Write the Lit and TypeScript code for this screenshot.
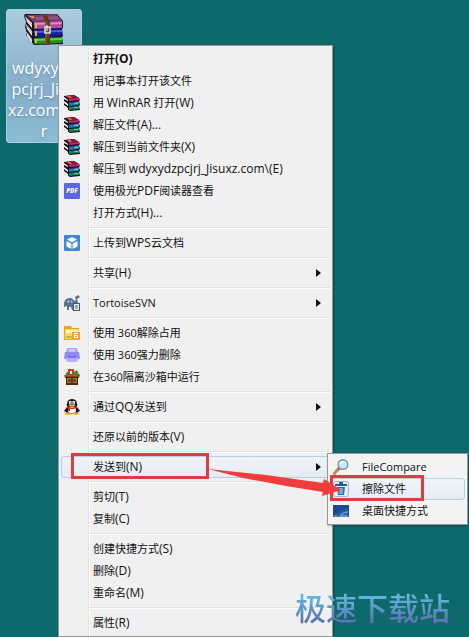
import { LitElement, html, css, svg, nothing } from "lit";
import { customElement, property } from "lit/decorators.js";

type Entry = {
  label: string;
  icon?: string;
  bold?: boolean;
  arrow?: boolean;
  active?: boolean;
  boxed?: boolean;
  children?: Entry[];
};

const glyphs: Record<string, unknown> = {
  rar: svg`
    <path d="M0 1L10 0L15 3L16 5L15 6L16 10L15 11L16 15L6 16L0 12Z" fill="#120c14"/>
    <path d="M1 1L10 0L15 3L5 4Z" fill="#8c1646"/><path d="M5 4L15 3V5L5 6Z" fill="#d2246c"/>
    <path d="M3 1L6 1L8 3L6 3Z" fill="#e08a2c"/>
    <path d="M0 2L4 5V6L0 4Z" fill="#fff"/>
    <path d="M5 7L15 6V7L5 8Z" fill="#173f86"/><path d="M5 8L15 7V10L5 11Z" fill="#2277ac"/><path d="M10 8L14 7V9L10 9Z" fill="#62c1e0"/>
    <path d="M0 6L4 9V11L0 8Z" fill="#fff"/>
    <path d="M5 12L15 11V14L5 15Z" fill="#14805a"/><path d="M10 12L14 12V13L10 13Z" fill="#5bd0a0"/>
    <path d="M0 10L4 13V15L0 12Z" fill="#fff"/>`,
  pdf: svg`
    <rect width="16" height="16" rx="1" fill="#5b66e3"/>
    <text x="8" y="10" font-size="6" font-weight="800" font-style="italic" font-family="Open Sans, sans-serif" text-anchor="middle" fill="#fff">PDF</text>`,
  wps: svg`
    <rect width="16" height="16" rx="1" fill="#3f87d9"/>
    <path d="M8 2L13 4.600L8 7.200L3 4.600Z" fill="#fff"/>
    <path d="M2.500 6L7.400 8.500V14L2.500 11.400ZM13.500 6L8.600 8.500V14L13.500 11.400Z" fill="#fff"/>`,
  tortoise: svg`
    <path d="M0 8Q1 3 6 3Q9 3 10 6L12 5L11 2L14 0L16 2L13 4L14 8L10 11V15H8L7 12L5 12V15H3V11L0 12Z" fill="#56748f"/>
    <path d="M3 6L5 5L6 7L4 8ZM7 5L9 7L7 8Z" fill="#a9c1d4"/>
    <rect x="9.500" y="8.500" width="6" height="7" fill="#eef2f5" stroke="#44566a"/>
    <path d="M11 11H14M11 13H14" stroke="#44566a"/>`,
  folder: svg`
    <path d="M0 1H7L8 3H15V15H0Z" fill="#e9a51f"/><rect x="1" y="4" width="14" height="10" fill="#ffd865"/>
    <rect x="2" y="5" width="12" height="3" fill="#fff3ba"/>
    <path d="M8 7H16V15H8Z" fill="#f2a43a"/><path d="M14 8.500H10.500V12.500H13.500V10.500H11" fill="none" stroke="#fff"/>
    <path d="M2 12H8" stroke="#a9c24b" stroke-width="2"/>`,
  shred: svg`
    <path d="M3 1H13L14 6H2Z" fill="#a9a4f6"/><path d="M1 5H15L16 12H0Z" fill="#9189f3"/>
    <path d="M1 11H15L13 15H3Z" fill="#b7b1fb"/><path d="M4 9H12V11H4Z" fill="#7a71e6"/>
    <path d="M5 2H11V5H5Z" fill="#c9c5ff"/>`,
  sandbox: svg`
    <path d="M2 4L6 1L8 4L13 1L15 5V8H1Z" fill="#3f8d35"/><path d="M4 0H10V6H4Z" fill="#d8312a"/><path d="M6 2H8V5H6Z" fill="#fff"/>
    <path d="M0 6L3 7H13L16 5L15 9H1Z" fill="#7a4415"/><path d="M2 8H14V16H2Z" fill="#4d280b"/>
    <path d="M3 9H13V14H3Z" fill="#a9702a"/><path d="M5 10V13M7 10H9V13H7ZM11 10V13" stroke="#3f2108" fill="none"/>`,
  qq: svg`
    <path d="M2 13Q4 11 8 12Q12 11 14 13Q14 16 8 15Q2 16 2 13Z" fill="#f0a21c"/>
    <path d="M3 8Q2 0 8 0Q14 0 13 8L16 12L14 13Q12 15 8 15Q4 15 2 13L0 12Z" fill="#16161c"/>
    <ellipse cx="8" cy="11" rx="4" ry="3.500" fill="#fff"/>
    <ellipse cx="6.300" cy="3.700" rx="1.400" ry="2" fill="#fff"/><ellipse cx="9.700" cy="3.700" rx="1.400" ry="2" fill="#fff"/>
    <circle cx="6.700" cy="4" r=".6"/><circle cx="9.400" cy="4" r=".6"/>
    <ellipse cx="8" cy="6.500" rx="3.300" ry="1.100" fill="#f5a81c"/>
    <path d="M3 7Q8 10 13 7V9Q8 11 3 9Z" fill="#e02a22"/><path d="M4 9H6V12H4Z" fill="#e02a22"/>
    <ellipse cx="4" cy="14.500" rx="3" ry="1.300" fill="#f0a21c"/><ellipse cx="12" cy="14.500" rx="3" ry="1.300" fill="#f0a21c"/>`,
  lens: svg`
    <path d="M1 15L6 9" stroke="#d8844f" stroke-width="3" stroke-linecap="round"/>
    <path d="M5 11L7 9" stroke="#62788c" stroke-width="2"/>
    <circle cx="10" cy="5.500" r="4.800" fill="#c7e8f6" stroke="#7b93a5" stroke-width="1.400"/>
    <path d="M7 5Q8 2 11 3" stroke="#fff" stroke-width="1.500" fill="none"/>`,
  trash: svg`
    <rect x=".5" y=".5" width="15" height="15" rx="2" fill="#e9edf0" stroke="#a9b5be"/>
    <path d="M2 3H14V5H2ZM6 1H10V3H6Z" fill="#1b5f9c"/><path d="M4 6H12L11 14H5Z" fill="#2370ad"/>
    <path d="M7 7V13M9 7V13" stroke="#c5e2f5"/>`,
  screen: svg`
    <rect y="2" width="16" height="12" fill="#274b80"/><rect x="1" y="3" width="14" height="9" fill="#2459a8"/>
    <path d="M1 3H15V5Q8 6 1 12Z" fill="#1c4793"/><path d="M7 12Q9 9 15 8V10Q11 10 9 12Z" fill="#5a9be0"/>
    <path d="M1 13H5" stroke="#8fd18a"/><path d="M6 13H15" stroke="#c1d3e6"/>`,
};

const groups: Entry[][] = [
  [
    { label: "打开(O)", bold: true },
    { label: "用记事本打开该文件" },
    { label: "用 WinRAR 打开(W)", icon: "rar" },
    { label: "解压文件(A)...", icon: "rar" },
    { label: "解压到当前文件夹(X)", icon: "rar" },
    { label: "解压到 wdyxydzpcjrj_Jisuxz.com\\(E)", icon: "rar" },
    { label: "使用极光PDF阅读器查看", icon: "pdf" },
    { label: "打开方式(H)..." },
  ],
  [{ label: "上传到WPS云文档", icon: "wps" }],
  [{ label: "共享(H)", arrow: true }],
  [{ label: "TortoiseSVN", icon: "tortoise", arrow: true }],
  [
    { label: "使用 360解除占用", icon: "folder" },
    { label: "使用 360强力删除", icon: "shred" },
    { label: "在360隔离沙箱中运行", icon: "sandbox" },
  ],
  [{ label: "通过QQ发送到", icon: "qq", arrow: true }],
  [{ label: "还原以前的版本(V)" }],
  [
    {
      label: "发送到(N)",
      arrow: true,
      active: true,
      boxed: true,
      children: [
        { label: "FileCompare", icon: "lens" },
        { label: "擦除文件", icon: "trash", active: true, boxed: true },
        { label: "桌面快捷方式", icon: "screen" },
      ],
    },
  ],
  [{ label: "剪切(T)" }, { label: "复制(C)" }],
  [{ label: "创建快捷方式(S)" }, { label: "删除(D)" }, { label: "重命名(M)" }],
  [{ label: "属性(R)" }],
];

// Latin runs inside a Chinese label are set one size up so both scripts look even.
const setLabel = (label: string) =>
  /[\u4e00-\u9fff]/.test(label)
    ? label
        .split(/([A-Za-z_.\\()]+)/)
        .map((run) => (/^[A-Za-z_.\\()]/.test(run) ? html`<span class="latin">${run}</span>` : run))
    : label;

@customElement("context-menu")
class ContextMenu extends LitElement {
  @property({ attribute: false }) groups: Entry[][] = [];
  @property({ type: Boolean, reflect: true }) sub = false;

  static styles = css`
    :host {
      display: block;
      box-sizing: border-box;
      min-width: 275px;
      padding: 2px;
      border: 1px solid #979797;
      background: linear-gradient(90deg, #e2e3e3 50%, #fff 50%) 29px 0 / 2px 100% no-repeat #f0f0f0;
      box-shadow: 1px 1px 2px rgba(0, 0, 0, 0.3);
    }
    :host([sub]) {
      min-width: 141px;
      background: #f3f3f3;
    }
    .row { position: relative; }
    .item {
      display: flex;
      align-items: center;
      box-sizing: border-box;
      width: 100%;
      height: 22px;
      margin: 0;
      padding: 0 8px 0 2px;
      border: 1px solid transparent;
      border-radius: 3px;
      background: none;
      color: #101010;
      font: inherit;
      text-align: left;
      white-space: nowrap;
    }
    .active {
      border-color: #b4cfe9;
      background: linear-gradient(rgba(240, 246, 252, 0.6), rgba(220, 232, 246, 0.6));
    }
    .bold { font-weight: 700; }
    .icon { width: 16px; height: 16px; margin-right: 13px; flex: none; }
    .label { flex: 1; }
    .latin { font-size: 12px; }
    .arrow { width: 5px; height: 8px; }
    .separator {
      height: 1px;
      margin: 3px 0 3px 28px;
      border: 0;
      border-top: 1px solid #e0e0e0;
      background: #fff;
    }
    .submenu { position: absolute; z-index: 1; top: -3px; left: calc(100% - 3px); }
    .box {
      position: absolute;
      z-index: 2;
      inset: -3px 121px -1px 10px;
      border: 3px solid #e03c40;
      pointer-events: none;
    }
    :host([sub]) .box { inset: -3px 41px -1px 0; }
  `;

  private row(entry: Entry) {
    return html`
      <div class="row">
        <button class="item ${entry.active ? "active" : ""} ${entry.bold ? "bold" : ""}" role="menuitem">
          <svg class="icon" viewBox="0 0 16 16" aria-hidden="true">${entry.icon ? glyphs[entry.icon] : nothing}</svg>
          <span class="label">${setLabel(entry.label)}</span>
          ${entry.arrow
            ? html`<svg class="arrow" viewBox="0 0 5 8" aria-hidden="true"><path d="M0 0L5 4L0 8Z" fill="#111" /></svg>`
            : nothing}
        </button>
        ${entry.children
          ? html`<context-menu class="submenu" role="menu" sub .groups=${[entry.children]}></context-menu>`
          : nothing}
        ${entry.boxed ? html`<span class="box"></span>` : nothing}
      </div>
    `;
  }

  render() {
    return this.groups.map(
      (group, i) => html`${i ? html`<hr class="separator" />` : nothing}${group.map((e) => this.row(e))}`
    );
  }
}

@customElement("app-root")
class AppRoot extends LitElement {
  static styles = css`
    :host {
      display: block;
      position: relative;
      min-height: 100vh;
      overflow: hidden;
      background: #0e696b;
      font: 11px/16px "Open Sans", "Noto Sans CJK SC", sans-serif;
    }
    .file {
      position: absolute;
      top: 9px;
      left: 6px;
      display: flex;
      flex-direction: column;
      align-items: center;
      gap: 12px;
      box-sizing: border-box;
      width: 76px;
      height: 134px;
      margin: 0;
      padding: 4px 0 0;
      border: 1px solid #a9d3e4;
      border-radius: 3px;
      background: linear-gradient(#abccdc, #86aeca 60%, #8cbcd4);
      color: #fff;
      font: 16px/21px "Open Sans", sans-serif;
      text-shadow: 0 1px 2px rgba(50, 90, 120, 0.5);
    }
    .archive { width: 40px; height: 32px; flex: none; }
    .menu { position: absolute; top: 45px; left: 58px; }
    .pointer {
      position: absolute;
      z-index: 3;
      top: 465px;
      left: 206px;
      width: 136px;
      height: 34px;
      pointer-events: none;
    }
    .watermark {
      position: absolute;
      z-index: 4;
      right: 19px;
      bottom: 10px;
      background: linear-gradient(#62bfe0 15%, #5b75b4 85%);
      background-clip: text;
      -webkit-background-clip: text;
      color: transparent;
      font: 500 31px/40px "Noto Sans CJK SC", sans-serif;
      white-space: nowrap;
    }
  `;

  render() {
    return html`
      <button class="file">
        <svg class="archive" viewBox="0 0 40 32" aria-hidden="true">
          <path d="M1 0L33 0L39 7V14L38 15L39 22L38 23L39 30L10 31L2 21V15L1 14L2 8L0 2Z" fill="#1a1420" />
          <path d="M2 1L32 0L38 7L9 8Z" fill="#7d3a72" />
          <path d="M12 3L33 2L36 5L12 6Z" fill="#96508b" />
          <path d="M10 8L38 7V14L10 15Z" fill="#ac4e9b" />
          <path d="M10 9L38 8V10L10 11Z" fill="#dc8bd0" />
          <path d="M1 2L8 9V14L3 8Z" fill="#eee" />
          <path d="M2 4L8 11" stroke="#a5a5a5" />
          <path d="M10 16L38 15V22L10 23Z" fill="#1519a4" />
          <path d="M10 17L38 16V18L10 19Z" fill="#4f60e4" />
          <path d="M2 10L8 17V22L3 15Z" fill="#eee" />
          <path d="M3 12L8 19" stroke="#a5a5a5" />
          <path d="M10 24L38 23V29L10 30Z" fill="#228f1a" />
          <path d="M10 25L38 24V26L10 27Z" fill="#63cf3b" />
          <path d="M2 17L8 25V29L3 22Z" fill="#eee" />
          <path d="M3 19L8 26" stroke="#a5a5a5" />
          <path d="M5 2L9 2L11 4L8 4Z" fill="#dfa83b" />
          <path d="M12 9V14M12 17V22M12 25V29" stroke="#d9b83f" stroke-width="2" />
          <path d="M18 0H22L26 7V31H21V8Z" fill="#5d3a18" />
          <path d="M22 7V30" stroke="#9c6c34" />
          <path d="M21 13H26V19H21Z" fill="#57524c" stroke="#e2dfd6" stroke-width="1.500" />
          <path d="M23 11V17" stroke="#fff" />
        </svg>
        <span>wdyxydz<br />pcjrj_Jisu<br />xz.com.ra<br />r</span>
      </button>
      <context-menu class="menu" role="menu" .groups=${groups}></context-menu>
      <svg class="pointer" viewBox="0 0 136 34" aria-hidden="true">
        <path d="M2 4L60 10L117 18L118 14L135 25L116 31L117 27L80 21L37 13Z" fill="#f03c3c" />
      </svg>
      <div class="watermark">极速下载站</div>
    `;
  }
}
